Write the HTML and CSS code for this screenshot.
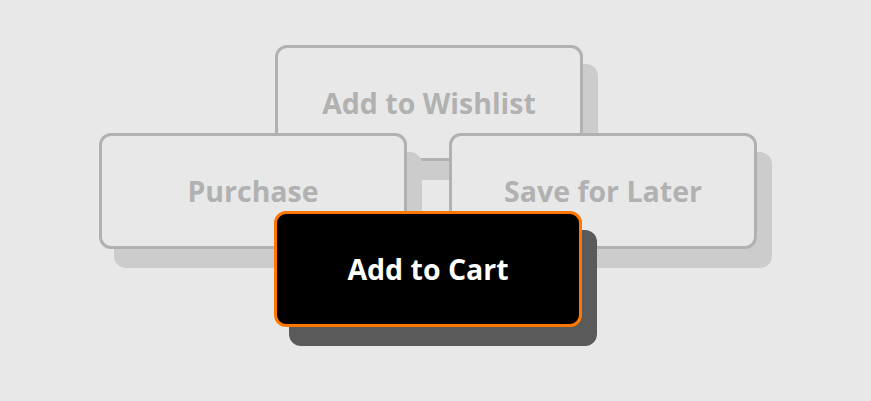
FILE: index.html
```html
<!DOCTYPE html>
<html lang="en">
<head>
<meta charset="UTF-8" />
<meta name="viewport" content="width=device-width, initial-scale=1" />
<title>Cart Actions</title>
<link rel="stylesheet" href="styles.css">
</head>
<body>

<div class="stage">
  <button class="action wishlist">Add to Wishlist</button>
  <button class="action purchase">Purchase</button>
  <button class="action later">Save for Later</button>
  <button class="action cart">Add to Cart</button>
</div>

</body>
</html>
```

FILE: styles.css
```css
body {
  margin: 0;
  background: #e8e8e8;
  font-family: "Open Sans", "DejaVu Sans", sans-serif;
}
.stage {
  position: relative;
  width: 871px;
  height: 401px;
}
.action {
  position: absolute;
  box-sizing: border-box;
  width: 308px;
  height: 116px;
  display: flex;
  align-items: center;
  justify-content: center;
  padding: 0;
  font-family: inherit;
  font-size: 28.5px;
  font-weight: 700;
  color: #b1b1b1;
  background: #e8e8e8;
  border: 3px solid #b1b1b1;
  border-radius: 12px;
  box-shadow: 15px 19px 0 #cccccc;
  cursor: pointer;
}
/* stacked back to front */
.wishlist {
  left: 275px;
  top: 45px;
}
.purchase {
  left: 99px;
  top: 133px;
}
.later {
  left: 449px;
  top: 133px;
}
.cart {
  left: 274px;
  top: 211px;
  color: #fff;
  background: #000;
  border-color: #ff7700;
  box-shadow: 15px 19px 0 #5a5a5a;
}
```
